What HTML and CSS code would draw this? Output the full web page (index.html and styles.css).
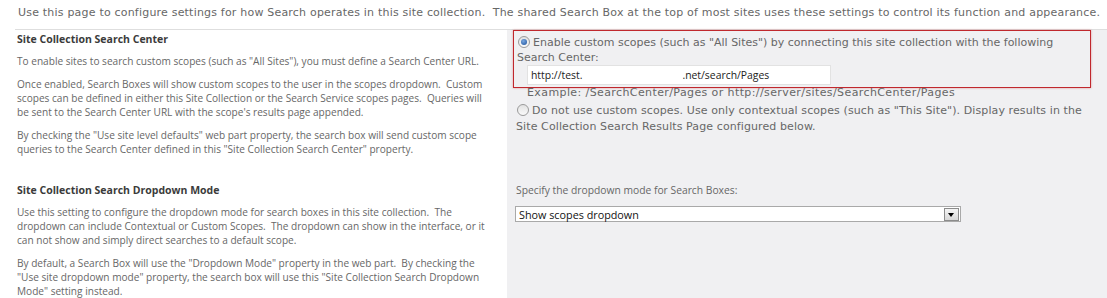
FILE: index.html
```html
<!DOCTYPE html>
<html>
<head>
<title>Search Settings</title>
<meta name="viewport" content="width=device-width, initial-scale=1.0">
<link rel="stylesheet" href="styles.css">
</head>
<body>

<p class='intro'>Use this page to configure settings for how Search operates in this site collection.&nbsp; The shared Search Box at the top of most sites uses these settings to control its function and appearance.</p>

<section class='settings'>

<div class='desc'>
<h3>Site Collection Search Center</h3>
<p>To enable sites to search custom scopes (such as "All Sites"), you must define a Search Center URL.</p>
<p>Once enabled, Search Boxes will show custom scopes to the user in the scopes dropdown.&nbsp; Custom scopes can be defined in either this Site Collection or the Search Service scopes pages.&nbsp; Queries will be sent to the Search Center URL with the scope's results page appended.</p>
<p>By checking the "Use site level defaults" web part property, the search box will send custom scope queries to the Search Center defined in this "Site Collection Search Center" property.</p>
</div>

<div class='field'>
<div class='marked'>
<div class='opt'><span class='radio on'></span>Enable custom scopes (such as "All Sites") by connecting this site collection with the following Search Center:</div>
<div class='url'>http://test.<span class='blur'></span>.net/search/Pages</div>
</div>
<div class='hint'>Example: /SearchCenter/Pages or http://server/sites/SearchCenter/Pages</div>
<div class='opt second'><span class='radio'></span>Do not use custom scopes. Use only contextual scopes (such as "This Site"). Display results in the Site Collection Search Results Page configured below.</div>
</div>

<div class='desc'>
<h3>Site Collection Search Dropdown Mode</h3>
<p>Use this setting to configure the dropdown mode for search boxes in this site collection.&nbsp; The dropdown can include Contextual or Custom Scopes.&nbsp; The dropdown can show in the interface, or it can not show and simply direct searches to a default scope.</p>
<p>By default, a Search Box will use the "Dropdown Mode" property in the web part.&nbsp; By checking the "Use site dropdown mode" property, the search box will use this "Site Collection Search Dropdown Mode" setting instead.</p>
</div>

<div class='field'>
<p class='label'>Specify the dropdown mode for Search Boxes:</p>
<div class='select'>Show scopes dropdown<span class='arrow'></span></div>
</div>

</section>

</body>
</html>
```

FILE: styles.css
```css
body {
   background-color: #fff;
   color: #676767;
   font-family: 'DejaVu Sans', Verdana, sans-serif;
   font-size: 11px;
   margin: 0;}

.intro {
   border-bottom: 1px solid #dedede;
   letter-spacing: .2px;
   line-height: 14px;
   margin: 0 0 0 15px;
   padding: 6px 0 9px 3px;
   white-space: nowrap;}

.settings {
   display: grid;
   grid-template-columns: 507px 1fr;}

.desc {
   font-family: 'Open Sans', 'Segoe UI', sans-serif;
   font-size: 10.1px;
   line-height: 14px;
   padding: 2px 14px 16px 17px;}

.desc h3 {
   color: #3b3b3b;
   font-size: 10.5px;
   font-weight: bold;
   margin: 0 0 8px 0;}

.desc p {
   margin: 0 0 9px 0;}

.field {
   background-color: #f0f0f2;
   padding: 0 16px 0 6px;}

.marked {
   border: 1px solid #c0282d;
   box-shadow: 0 0 2px rgba(200,40,45,.45);
   padding: 4px 8px 2px 3px;}

.opt {
   line-height: 15px;}

.second {
   letter-spacing: .1px;
   line-height: 16px;
   margin: 3px 0 0 3px;}

.radio {
   background: linear-gradient(#e2e2e2, #fafafa);
   border: 1px solid #9a9a9a;
   border-radius: 50%;
   box-sizing: border-box;
   display: inline-block;
   margin: 0 3px 0 1px;
   position: relative;
   vertical-align: -2px;
   height:12px; width:12px;}

.radio.on:after {
   background: radial-gradient(circle at 40% 35%, #7aa8e0, #1a4f9a);
   border-radius: 50%;
   content: '';
   position: absolute;
   left:2px; top:2px;
   height:6px; width:6px;}

.url {
   background-color: #fff;
   border: 1px solid #e2e2e2;
   box-sizing: border-box;
   color: #222;
   font-family: 'Open Sans', 'Segoe UI', sans-serif;
   font-size: 10.4px;
   line-height: 18px;
   margin: 0 0 0 10px;
   padding: 0 3px;
   height:20px; width:304px;}

.blur {
   display: inline-block;
   width:100px;}

.hint {
   letter-spacing: .4px;
   line-height: 14px;
   margin: -2px 0 0 14px;}

.label {
   font-family: 'Open Sans', 'Segoe UI', sans-serif;
   font-size: 10.3px;
   line-height: 14px;
   margin: 2px 0 9px 3px;}

.select {
   background-color: #fff;
   border: 1px solid #a9a9a9;
   box-sizing: border-box;
   color: #111;
   display: flex;
   align-items: center;
   justify-content: space-between;
   font-family: 'Open Sans', 'Segoe UI', sans-serif;
   font-size: 10.8px;
   margin: 0 0 0 2px;
   padding: 0 1px 0 3px;
   height:16px; width:446px;}

.arrow {
   background: linear-gradient(#f4f4f4, #d8d8d8);
   border: 1px solid #8c8c8c;
   box-sizing: border-box;
   position: relative;
   height:13px; width:15px;}

.arrow:after {
   border-left: 3px solid transparent;
   border-right: 3px solid transparent;
   border-top: 4px solid #000;
   content: '';
   position: absolute;
   left:3px; top:4px;}
```
